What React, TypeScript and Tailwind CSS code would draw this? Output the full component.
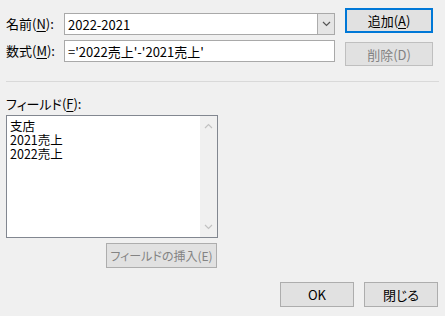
const Chevron = ({ up, color }: { up?: boolean; color: string }) => (
  <svg width="9" height="6" viewBox="0 0 9 6" className={up ? "rotate-180" : ""}>
    <path d="M1 1 L4.5 4.5 L8 1" fill="none" stroke={color} strokeWidth="1.2" />
  </svg>
);

const fields = ["支店", "2021売上", "2022売上"];

const App = () => {
  return (
    <div
      className="flex h-[316px] w-[445px] flex-col bg-[#f0f0f0] text-[13px] text-black [font-feature-settings:'palt']"
      style={{ fontFamily: '"Noto Sans CJK JP", "Noto Sans", sans-serif' }}
    >
      <div className="flex pt-[8px] pl-[6px]">
        <div className="mt-[5px] flex w-[329px] flex-col gap-[5px]">
          <div className="flex h-[22px] items-center">
            <span className="w-[58px]">
              名前(<span className="underline underline-offset-2">N</span>):
            </span>
            <div className="flex h-[22px] w-[271px] items-stretch border border-[#a9a9a9] bg-white">
              <span className="flex flex-1 items-center pl-[3px] leading-none">2022-2021</span>
              <span className="flex w-[17px] items-center justify-center border-l border-[#acacac] bg-[#e5e5e5]">
                <Chevron color="#555555" />
              </span>
            </div>
          </div>
          <div className="flex h-[22px] items-center">
            <span className="w-[58px]">
              数式(<span className="underline underline-offset-2">M</span>):
            </span>
            <div className="flex h-[22px] w-[271px] items-center border border-[#a9a9a9] bg-white pl-[3px] leading-none">
              ='2022売上'-'2021売上'
            </div>
          </div>
        </div>
        <div className="ml-[10px] flex flex-col gap-[9px]">
          <button className="h-[25px] w-[88px] border-2 border-[#0078d7] bg-[#e1e1e1] leading-none">
            追加(<span className="underline underline-offset-2">A</span>)
          </button>
          <button className="h-[24px] w-[88px] border border-[#bfbfbf] bg-[#e1e1e1] leading-none text-[#838383]">
            削除(D)
          </button>
        </div>
      </div>

      <div className="mx-[6px] mt-[15px] h-px bg-[#d9d9d9]" />

      <div className="mt-[14px] pl-[6px] leading-[16px]">
        フィールド(<span className="underline underline-offset-2">F</span>):
      </div>

      <div className="ml-[6px] mt-[3px] flex h-[123px] w-[212px] border border-[#828790] bg-white">
        <div className="flex-1 pl-[3px] pt-[3px] text-[12.5px] leading-[14px]">
          {fields.map((f) => (
            <div key={f}>{f}</div>
          ))}
        </div>
        <div className="flex w-[17px] flex-col items-center justify-between bg-[#f0f0f0] py-[7px]">
          <Chevron up color="#c2c2c2" />
          <Chevron color="#c2c2c2" />
        </div>
      </div>

      <div className="ml-[106px] mt-[5px]">
        <button className="h-[25px] w-[111px] whitespace-nowrap border border-[#adadad] bg-[#e1e1e1] text-[12px] leading-none text-[#838383]">
          フィールドの挿入(E)
        </button>
      </div>

      <div className="mt-[14px] flex justify-end gap-[10px] pr-[7px]">
        <button className="h-[25px] w-[74px] border border-[#adadad] bg-[#e1e1e1] leading-none">OK</button>
        <button className="h-[25px] w-[74px] border border-[#adadad] bg-[#e1e1e1] leading-none">閉じる</button>
      </div>
    </div>
  );
};

export default App;
